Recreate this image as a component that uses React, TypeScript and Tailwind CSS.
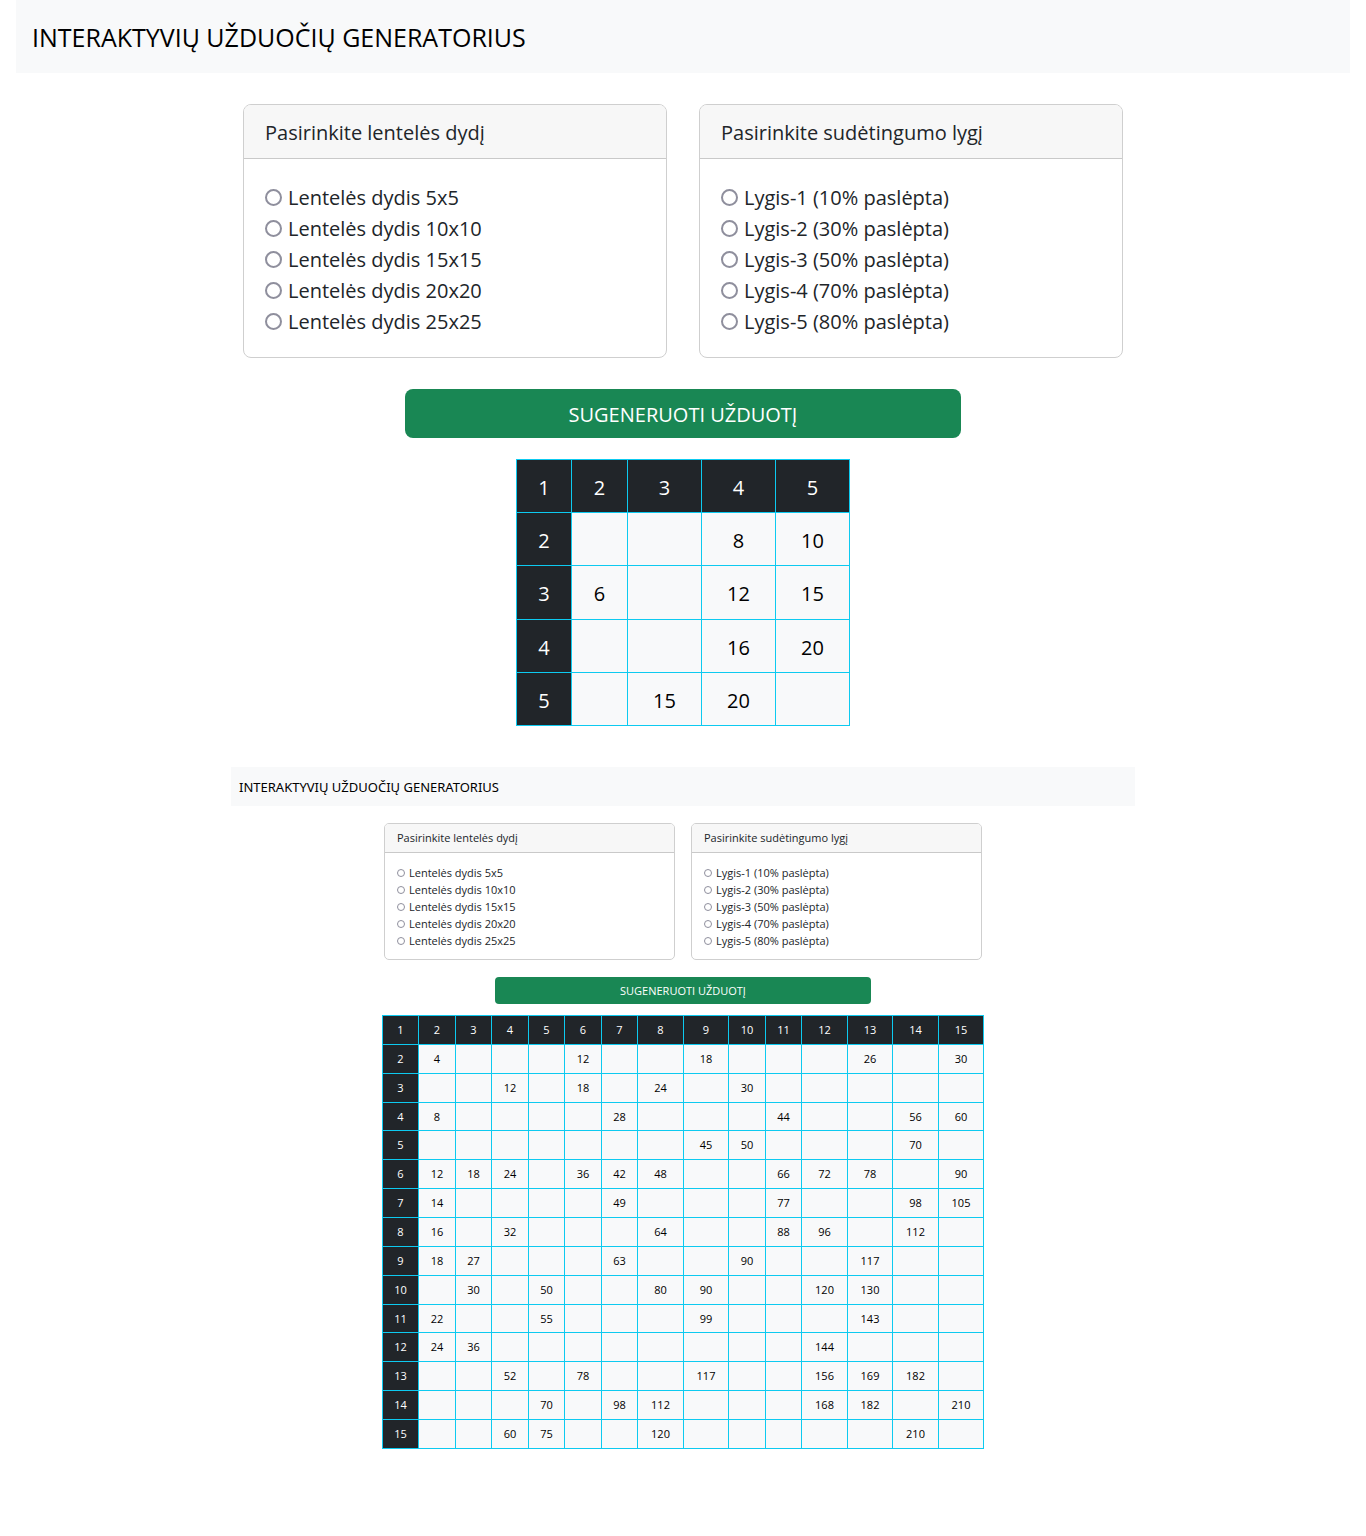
import { useId } from "react";

type Size = "large" | "small";
type Cell = number | null;

const SIZES = ["5x5", "10x10", "15x15", "20x20", "25x25"].map((s) => `Lentelės dydis ${s}`);
const LEVELS = [10, 30, 50, 70, 80].map((p, i) => `Lygis-${i + 1} (${p}% paslėpta)`);

const _ = null;

const SMALL_TASK: Cell[][] = [
  [1, 2, 3, 4, 5],
  [2, _, _, 8, 10],
  [3, 6, _, 12, 15],
  [4, _, _, 16, 20],
  [5, _, 15, 20, _],
];

const BIG_TASK: Cell[][] = [
  [1, 2, 3, 4, 5, 6, 7, 8, 9, 10, 11, 12, 13, 14, 15],
  [2, 4, _, _, _, 12, _, _, 18, _, _, _, 26, _, 30],
  [3, _, _, 12, _, 18, _, 24, _, 30, _, _, _, _, _],
  [4, 8, _, _, _, _, 28, _, _, _, 44, _, _, 56, 60],
  [5, _, _, _, _, _, _, _, 45, 50, _, _, _, 70, _],
  [6, 12, 18, 24, _, 36, 42, 48, _, _, 66, 72, 78, _, 90],
  [7, 14, _, _, _, _, 49, _, _, _, 77, _, _, 98, 105],
  [8, 16, _, 32, _, _, _, 64, _, _, 88, 96, _, 112, _],
  [9, 18, 27, _, _, _, 63, _, _, 90, _, _, 117, _, _],
  [10, _, 30, _, 50, _, _, 80, 90, _, _, 120, 130, _, _],
  [11, 22, _, _, 55, _, _, _, 99, _, _, _, 143, _, _],
  [12, 24, 36, _, _, _, _, _, _, _, _, 144, _, _, _],
  [13, _, _, 52, _, 78, _, _, 117, _, _, 156, 169, 182, _],
  [14, _, _, _, 70, _, 98, 112, _, _, _, 168, 182, _, 210],
  [15, _, _, 60, 75, _, _, 120, _, _, _, _, _, 210, _],
];

const SMALL_TASK_COLS = ["w-[55px]", "w-[56px]", "w-[74px]", "w-[74px]", "w-[74px]"];

const BIG_TASK_COLS = [
  "w-[36px]", "w-[37px]", "w-[36px]", "w-[37px]", "w-[36px]",
  "w-[37px]", "w-[36px]", "w-[46px]", "w-[45px]", "w-[37px]",
  "w-[36px]", "w-[46px]", "w-[45px]", "w-[46px]", "w-[45px]",
];

const STYLES = {
  large: {
    header: "mx-4 px-4 pt-[17px] pb-4 text-[25px] leading-10",
    cards: "mt-[31px] max-w-[880px] gap-8",
    card: "rounded-lg",
    cardTitle: "px-[21px] pt-3 pb-[10px] text-[20px] leading-[31px]",
    cardBody: "px-[21px] pt-[23px] pb-5 text-[20px] leading-[31px]",
    option: "gap-1.5",
    radio: "size-[17px] border-2",
    button: "mt-[31px] max-w-[556px] rounded-lg pt-[10px] pb-2 text-[20px] leading-[31px]",
    table: "mt-[21px] h-[267px] w-[334px] text-[20px] leading-[31px]",
    cell: "px-0 pt-[3px] pb-0",
  },
  small: {
    header: "mx-auto max-w-[904px] px-2 pt-[9px] pb-[7px] font-['Noto_Sans',sans-serif] text-[13px] leading-[23px]",
    cards: "mt-[17px] max-w-[598px] gap-4",
    card: "rounded-[5px]",
    cardTitle: "px-3 py-1.5 text-[11px] leading-4",
    cardBody: "px-3 pt-[11px] pb-[10px] text-[11px] leading-[17px]",
    option: "gap-1",
    radio: "size-2 border",
    button: "mt-[17px] max-w-[376px] rounded-[4px] py-[5px] text-[11px] leading-[17px]",
    table: "mt-[11px] h-[434px] w-[602px] text-[11px] leading-4",
    cell: "p-0",
  },
};

function OptionCard({ size, title, options }: { size: Size; title: string; options: string[] }) {
  const id = useId();
  const s = STYLES[size];
  return (
    <section className={`overflow-hidden border border-[#cfcfcf] bg-white ${s.card}`}>
      <h2 id={id} className={`border-b border-[#c9c9c9] bg-[#f7f7f7] ${s.cardTitle}`}>
        {title}
      </h2>
      <div role="radiogroup" aria-labelledby={id} className={s.cardBody}>
        {options.map((option) => (
          <label key={option} className={`flex items-center ${s.option}`}>
            <input
              type="radio"
              name={id}
              value={option}
              className={`shrink-0 appearance-none rounded-full border-[#8f8f9d] bg-white checked:bg-[#0d6efd] ${s.radio}`}
            />
            {option}
          </label>
        ))}
      </div>
    </section>
  );
}

function TaskTable({ size, rows, cols }: { size: Size; rows: Cell[][]; cols: string[] }) {
  const s = STYLES[size];
  const [head, ...body] = rows;
  const headCell = `border border-[#0dcaf0] bg-[#212529] text-center font-normal text-white ${s.cell}`;
  return (
    <table className={`mx-auto table-fixed border-collapse ${s.table}`}>
      <colgroup>
        {cols.map((width, i) => (
          <col key={i} className={width} />
        ))}
      </colgroup>
      <tbody>
        <tr>
          {head.map((value) => (
            <th key={value} scope="col" className={headCell}>
              {value}
            </th>
          ))}
        </tr>
        {body.map(([label, ...cells]) => (
          <tr key={label}>
            <th scope="row" className={headCell}>
              {label}
            </th>
            {cells.map((value, i) => (
              <td key={i} className={`border border-[#0dcaf0] bg-[#f8f9fa] text-center text-black ${s.cell}`}>
                {value}
              </td>
            ))}
          </tr>
        ))}
      </tbody>
    </table>
  );
}

function Generator({ size, rows, cols }: { size: Size; rows: Cell[][]; cols: string[] }) {
  const s = STYLES[size];
  return (
    <div>
      <header className={`bg-[#f8f9fa] text-black ${s.header}`}>
        <h1>INTERAKTYVIŲ UŽDUOČIŲ GENERATORIUS</h1>
      </header>
      <form onSubmit={(e) => e.preventDefault()}>
        <div className={`mx-auto grid w-full grid-cols-2 ${s.cards}`}>
          <OptionCard size={size} title="Pasirinkite lentelės dydį" options={SIZES} />
          <OptionCard size={size} title="Pasirinkite sudėtingumo lygį" options={LEVELS} />
        </div>
        <button type="submit" className={`mx-auto block w-full bg-[#198754] text-center text-white ${s.button}`}>
          SUGENERUOTI UŽDUOTĮ
        </button>
      </form>
      <TaskTable size={size} rows={rows} cols={cols} />
    </div>
  );
}

export default function App() {
  return (
    <main className="flex min-h-screen flex-col gap-[41px] bg-white pb-10 font-['Open_Sans','Noto_Sans',sans-serif] text-[#212529]">
      <Generator size="large" rows={SMALL_TASK} cols={SMALL_TASK_COLS} />
      <Generator size="small" rows={BIG_TASK} cols={BIG_TASK_COLS} />
    </main>
  );
}
